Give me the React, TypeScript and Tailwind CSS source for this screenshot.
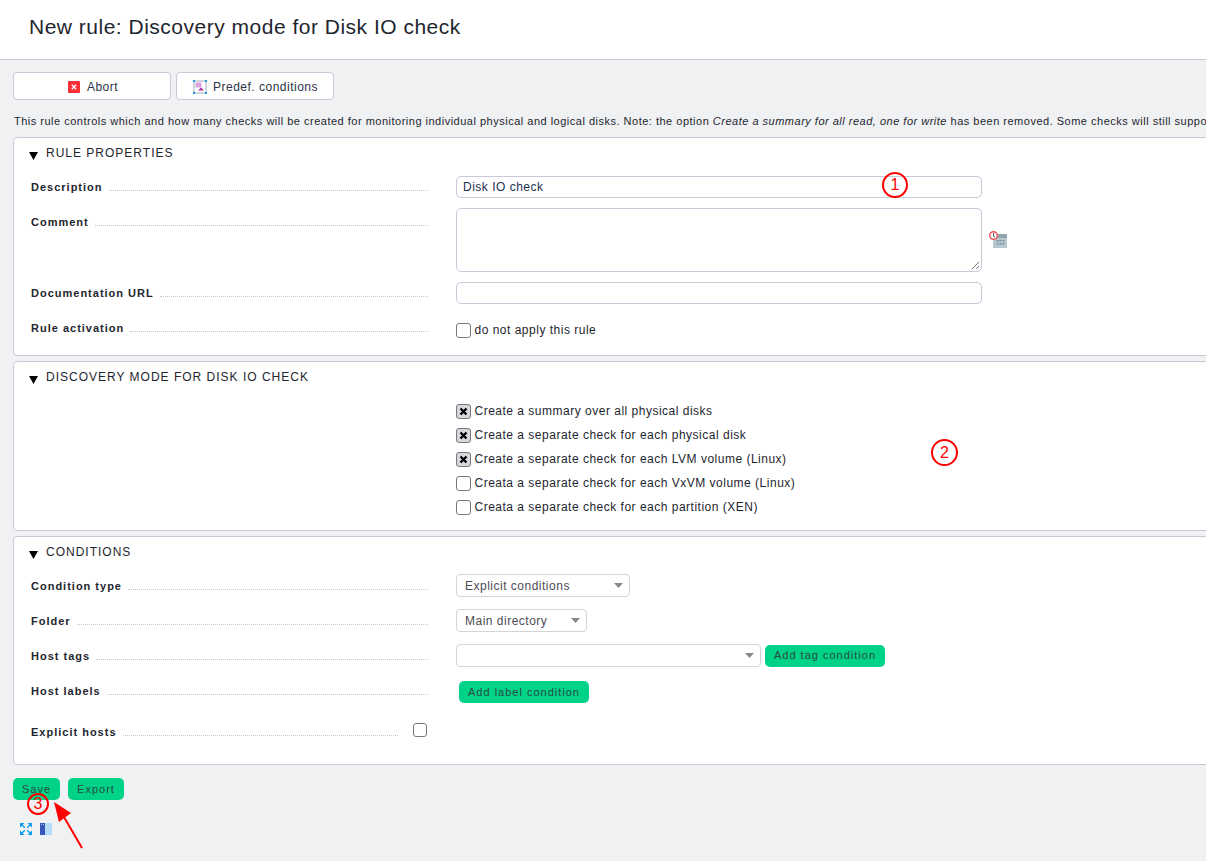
import React from 'react';

const fieldBorder = 'border border-[#c8cad8] rounded-[5px] bg-white';

const Label: React.FC<{ text: string; width?: string }> = ({ text, width = 'w-[397px]' }) => (
  <div className={`${width} shrink-0 flex items-end h-[14px]`}>
    <span className="font-bold text-[11px] leading-[14px] tracking-[1px] text-[#1e262e] whitespace-nowrap">{text}</span>
    <span className="flex-1 ml-[6px] mb-[3px] border-b border-dotted border-[#c4c6ce]" />
  </div>
);

const SectionHead: React.FC<{ title: string }> = ({ title }) => (
  <div className="flex items-center h-[30px] pl-[15px]">
    <svg width="10" height="8" viewBox="0 0 10 8" className="mt-[5px] mr-[7px]">
      <path d="M0 0H9L4.5 8Z" fill="#000" />
    </svg>
    <span className="text-[12px] tracking-[1px] text-[#1e262e] uppercase whitespace-nowrap">{title}</span>
  </div>
);

const Check: React.FC<{ checked?: boolean; label?: string; small?: boolean }> = ({ checked, label, small }) => (
  <div className="flex items-center h-[14px]">
    <span
      className={`${small ? 'w-[14px] h-[14px]' : 'w-[15px] h-[15px]'} rounded-[3px] border border-[#77797f] flex items-center justify-center ${
        checked ? 'bg-[#d8d9dd]' : 'bg-white'
      }`}
    >
      {checked && (
        <svg width="9" height="9" viewBox="0 0 9 9">
          <path d="M1.5 1.5L7.5 7.5M7.5 1.5L1.5 7.5" stroke="#000" strokeWidth="2.4" />
        </svg>
      )}
    </span>
    {label && <span className="ml-[3.5px] text-[12px] tracking-[0.5px] text-[#1e262e] whitespace-nowrap">{label}</span>}
  </div>
);

const Select: React.FC<{ text?: string; width: string }> = ({ text, width }) => (
  <div className={`${width} h-[23px] border border-[#d4d4d4] rounded-[4px] bg-white flex items-center justify-between pl-[8px] pr-[6px]`}>
    <span className="text-[12px] tracking-[0.5px] text-[#4c4c55] whitespace-nowrap">{text}</span>
    <svg width="9" height="5" viewBox="0 0 9 5">
      <path d="M0 0H9L4.5 5Z" fill="#888" />
    </svg>
  </div>
);

const GreenButton: React.FC<{ text: string; width: string }> = ({ text, width }) => (
  <button className={`${width} h-[22px] rounded-[5px] bg-[#00d387] text-[11px] tracking-[1px] text-[#2b4a46] text-center whitespace-nowrap`}>
    {text}
  </button>
);

const App: React.FC = () => {
  return (
    <div className="relative w-[1206px] h-[861px] overflow-hidden bg-[#f0f1f3] font-['Liberation_Sans',Arial,sans-serif]">
      <div className="h-[60px] bg-white border-b border-[#c8cad4] flex items-center pl-[29px] pb-[5px]">
        <h1 className="text-[21px] tracking-[0.5px] text-[#1e262e]">New rule: Discovery mode for Disk IO check</h1>
      </div>

      <div className="pl-[13px] pt-[12px]">
        <div className="flex gap-[5px]">
          <button className="w-[158px] h-[28px] bg-white border border-[#c8cad8] rounded-[4px] flex items-center justify-center text-[12px] tracking-[0.5px] text-[#2a3344] pl-[2px] pt-[1px]">
            <svg width="12" height="12" viewBox="0 0 12 12" className="mr-[7px]">
              <rect width="12" height="12" rx="1" fill="#fb2f36" />
              <path d="M3.8 3.8L8.2 8.2M8.2 3.8L3.8 8.2" stroke="#fff" strokeWidth="1.3" />
            </svg>
            Abort
          </button>
          <button className="w-[158px] h-[28px] bg-white border border-[#c8cad8] rounded-[4px] flex items-center justify-center text-[12px] tracking-[0.5px] text-[#2a3344] pl-[1px] pt-[1px]">
            <svg width="14" height="14" viewBox="0 0 14 14" className="mr-[6px]">
              <rect x="1" y="1" width="12" height="12" fill="none" stroke="#8a95a8" strokeWidth="0.8" />
              <rect x="2.5" y="2.5" width="6" height="5" fill="#dca4dc" />
              <path d="M5 10.5L8 7.5L11 10.5Z" fill="#a92ba5" />
              <rect x="0" y="0" width="2" height="2" fill="#2196e8" />
              <rect x="12" y="0" width="2" height="2" fill="#2196e8" />
              <rect x="0" y="12" width="2" height="2" fill="#2196e8" />
              <rect x="12" y="12" width="2" height="2" fill="#2196e8" />
            </svg>
            Predef. conditions
          </button>
        </div>

        <p className="mt-[14px] mb-[9px] ml-[1px] h-[14px] text-[11px] leading-[14px] tracking-[0.5px] text-[#1e262e] whitespace-nowrap">
          This rule controls which and how many checks will be created for monitoring individual physical and logical disks. Note: the option{' '}
          <em>Create a summary for all read, one for write</em> has been removed. Some checks will still support this settings, but it will be removed there soon.
        </p>

        <section className="w-[1300px] h-[219px] bg-white border border-[#c8cad8] rounded-[4px]">
          <SectionHead title="Rule properties" />
          <div className="pl-[17px] pt-[8px]">
            <div className="flex h-[22px] items-start pt-[4px]">
              <Label text="Description" />
              <div className={`ml-[28px] -mt-[4px] w-[526px] h-[22px] ${fieldBorder} flex items-center pl-[6px] text-[12px] tracking-[0.5px] text-[#1e3050]`}>
                Disk IO check
              </div>
            </div>
            <div className="flex mt-[10px] items-start pt-[7px]">
              <Label text="Comment" />
              <div className={`relative ml-[28px] -mt-[7px] w-[526px] h-[64px] ${fieldBorder}`}>
                <svg width="9" height="9" viewBox="0 0 9 9" className="absolute right-[1px] bottom-[1px]">
                  <path d="M1 8L8 1M5 8L8 5" stroke="#555" strokeWidth="0.8" />
                </svg>
              </div>
              <svg width="18" height="17" viewBox="0 0 18 17" className="ml-[7px] mt-[16px]">
                <rect x="4" y="3" width="14" height="14" rx="1" fill="#8fa4ad" />
                <rect x="4" y="7" width="14" height="10" fill="#b9c8cf" />
                <path d="M7.5 9h2v1.6h-2zM10.5 9h2v1.6h-2zM13.5 9h2v1.6h-2zM7.5 12h2v1.6h-2zM10.5 12h2v1.6h-2zM13.5 12h2v1.6h-2z" fill="#7d929b" />
                <circle cx="4.5" cy="4.5" r="3.8" fill="#fff" stroke="#ee5257" strokeWidth="1.4" />
                <path d="M4.5 2.2V5L6 6" stroke="#444" strokeWidth="1" fill="none" />
              </svg>
            </div>
            <div className="flex mt-[10px] h-[22px] items-start pt-[4px]">
              <Label text="Documentation URL" />
              <div className={`ml-[28px] -mt-[4px] w-[526px] h-[22px] ${fieldBorder}`} />
            </div>
            <div className="flex mt-[17px] items-start">
              <Label text="Rule activation" />
              <div className="ml-[28px] mt-[2px]">
                <Check label="do not apply this rule" />
              </div>
            </div>
          </div>
        </section>

        <section className="w-[1300px] h-[170px] mt-[5px] bg-white border border-[#c8cad8] rounded-[4px]">
          <SectionHead title="Discovery mode for Disk IO check" />
          <div className="pl-[442px] pt-[12px] flex flex-col gap-[10px]">
            <Check checked label="Create a summary over all physical disks" />
            <Check checked label="Create a separate check for each physical disk" />
            <Check checked label="Create a separate check for each LVM volume (Linux)" />
            <Check label="Creata a separate check for each VxVM volume (Linux)" />
            <Check label="Creata a separate check for each partition (XEN)" />
          </div>
        </section>

        <section className="w-[1300px] h-[229px] mt-[5px] bg-white border border-[#c8cad8] rounded-[4px]">
          <SectionHead title="Conditions" />
          <div className="pl-[17px] pt-[7px]">
            <div className="flex h-[23px] items-start pt-[5px]">
              <Label text="Condition type" />
              <div className="ml-[28px] -mt-[5px]">
                <Select text="Explicit conditions" width="w-[174px]" />
              </div>
            </div>
            <div className="flex mt-[12px] h-[23px] items-start pt-[5px]">
              <Label text="Folder" />
              <div className="ml-[28px] -mt-[5px]">
                <Select text="Main directory" width="w-[131px]" />
              </div>
            </div>
            <div className="flex mt-[12px] h-[23px] items-start pt-[5px]">
              <Label text="Host tags" />
              <div className="ml-[28px] -mt-[5px] flex items-center gap-[4px]">
                <Select width="w-[305px]" />
                <GreenButton text="Add tag condition" width="w-[120px]" />
              </div>
            </div>
            <div className="flex mt-[12px] h-[22px] items-start pt-[5px]">
              <Label text="Host labels" />
              <div className="ml-[31px] -mt-[5px]">
                <GreenButton text="Add label condition" width="w-[130px]" />
              </div>
            </div>
            <div className="flex mt-[24px] items-start">
              <Label text="Explicit hosts" width="w-[367px]" />
              <div className="ml-[15px] -mt-[2px]">
                <Check small />
              </div>
            </div>
          </div>
        </section>

        <div className="flex gap-[8px] mt-[13px]">
          <GreenButton text="Save" width="w-[47px]" />
          <GreenButton text="Export" width="w-[56px]" />
        </div>

        <div className="flex gap-[8px] mt-[23px] ml-[7px]">
          <svg width="12" height="12" viewBox="0 0 12 12" fill="#0b9df0" stroke="#0b9df0">
            <path d="M0 0H4.5L0 4.5ZM12 0V4.5L7.5 0ZM12 12H7.5L12 7.5ZM0 12V7.5L4.5 12Z" stroke="none" />
            <path d="M1.5 1.5L4.8 4.8M10.5 1.5L7.2 4.8M10.5 10.5L7.2 7.2M1.5 10.5L4.8 7.2" strokeWidth="1.3" fill="none" />
          </svg>
          <svg width="12" height="12" viewBox="0 0 12 12">
            <rect width="12" height="12" fill="#b5dcfa" />
            <rect width="5" height="12" fill="#3557b5" />
            <rect x="1" y="1" width="1" height="1" fill="#a8c4ee" />
            <rect x="3" y="1" width="1" height="1" fill="#a8c4ee" />
          </svg>
        </div>
      </div>

      {/* red markers drawn on top of the screenshot */}
      <div className="absolute left-[882px] top-[172px] w-[26px] h-[26px] rounded-full border-2 border-[#f00] flex items-center justify-center text-[16px] text-[#f00]">1</div>
      <div className="absolute left-[931px] top-[439px] w-[27px] h-[27px] rounded-full border-2 border-[#f00] flex items-center justify-center text-[16px] text-[#f00]">2</div>
      <div className="absolute left-[27px] top-[793px] w-[22px] h-[22px] rounded-full border-2 border-[#f00] flex items-center justify-center text-[16px] text-[#f00]">3</div>
      <svg className="absolute left-[50px] top-[795px]" width="36" height="56" viewBox="0 0 36 56">
        <path d="M32 53L14 22" stroke="#f00" strokeWidth="2" />
        <path d="M4 7L21 18L9 27Z" fill="#f00" />
      </svg>
    </div>
  );
};

export default App;
